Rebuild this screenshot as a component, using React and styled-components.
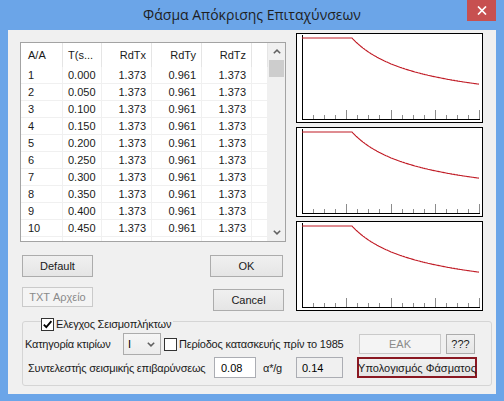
import { createGlobalStyle, styled } from "styled-components";

const GlobalStyle = createGlobalStyle`
  html, body {
    margin: 0;
    padding: 0;
  }
  body {
    font-family: "Liberation Sans", Arial, sans-serif;
    font-size: 11px;
    color: #000;
  }
`;

const Frame = styled.div`
  width: 504px;
  height: 401px;
  box-sizing: border-box;
  background: #6ba5e8;
  padding: 0 8px 7px;
  display: flex;
  flex-direction: column;
`;

const TitleBar = styled.div`
  height: 30px;
  flex-shrink: 0;
  display: flex;
  align-items: flex-start;
`;

const Title = styled.div`
  flex: 1;
  margin-left: 29px;
  text-align: center;
  line-height: 30px;
  font-family: "Open Sans", "Noto Sans", sans-serif;
  font-size: 14px;
  color: #1e1e1e;
`;

const CloseButton = styled.div`
  width: 29px;
  height: 21px;
  background: #c75050;
  display: flex;
  align-items: center;
  justify-content: center;
`;

const Client = styled.div`
  flex: 1;
  background: #f0f0f0;
  display: flex;
  flex-direction: column;
`;

const TopArea = styled.div`
  display: flex;
  gap: 10px;
  padding: 3px 0 0 12px;
`;

const LeftColumn = styled.div`
  width: 266px;
  padding-top: 9px;
  display: flex;
  flex-direction: column;
`;

const ListBox = styled.div`
  height: 200px;
  box-sizing: border-box;
  border: 1px solid #a3a3a3;
  background: #fff;
  display: flex;
  overflow: hidden;
`;

const Table = styled.div`
  flex: 1;
  display: grid;
  grid-template-columns: 42px 39px 50px 50px 50px 1fr;
  grid-template-rows: 24px;
  grid-auto-rows: 17px;
  align-content: start;
  overflow: hidden;
`;

const Cell = styled.div`
  box-sizing: border-box;
  display: flex;
  align-items: center;
  justify-content: ${(p) => (p.$right ? "flex-end" : "flex-start")};
  padding: ${(p) => (p.$right ? "0 5px 0 0" : `0 0 0 ${p.$pad || 0}px`)};
  border-right: 1px solid ${(p) => (p.$head ? "#e5e5e5" : "#f0f0f0")};
  border-bottom: ${(p) => (p.$head ? "none" : "1px solid #f0f0f0")};
  white-space: nowrap;
  color: #1a1a1a;
`;

const Scrollbar = styled.div`
  width: 17px;
  flex-shrink: 0;
  background: #f0f0f0;
  display: flex;
  flex-direction: column;
`;

const ScrollArrow = styled.div`
  height: 17px;
  display: flex;
  align-items: center;
  justify-content: center;
`;

const ScrollThumb = styled.div`
  height: 17px;
  margin: 0 1px;
  background: #cdcdcd;
`;

const ScrollTrack = styled.div`
  flex: 1;
`;

const ButtonRow = styled.div`
  display: flex;
  align-items: flex-start;
  justify-content: space-between;
  margin-top: ${(p) => p.$top}px;
  padding: 0 ${(p) => p.$right}px 0 2px;
`;

const Button = styled.button`
  box-sizing: border-box;
  width: ${(p) => p.$w}px;
  height: ${(p) => p.$h || 22}px;
  margin-top: ${(p) => p.$top || 0}px;
  margin-left: ${(p) => p.$ml || 0}px;
  padding: 0;
  font-family: inherit;
  font-size: 11px;
  font-weight: normal;
  white-space: nowrap;
  display: flex;
  align-items: center;
  justify-content: center;
  border: ${(p) =>
    p.$accent
      ? "2px solid #8a1822"
      : `1px solid ${p.disabled ? "#cacaca" : "#acacac"}`};
  background: ${(p) =>
    p.disabled ? "#f4f4f4" : "linear-gradient(#f0f0f0, #e5e5e5)"};
  color: ${(p) => (p.disabled ? "#8a8a8a" : "#1a1a1a")};
`;

const ChartColumn = styled.div`
  display: flex;
  flex-direction: column;
  gap: 4px;
`;

const ChartBox = styled.div`
  width: 187px;
  height: 90px;
  box-sizing: border-box;
  border: 1px solid #000;
  background: #fff;
`;

const GroupBox = styled.div`
  margin: 10px 0 0 14px;
  width: 470px;
  height: 65px;
  box-sizing: border-box;
  border: 1px solid #d5d5d5;
  border-radius: 3px;
  display: flex;
  flex-direction: column;
`;

const GroupTitle = styled.div`
  align-self: flex-start;
  margin: -5px 0 0 18px;
  height: 14px;
  padding-right: 2px;
  background: #f0f0f0;
  display: flex;
  align-items: center;
  gap: 2px;
`;

const FormRow = styled.div`
  display: flex;
  align-items: center;
  height: ${(p) => p.$h}px;
  margin-top: 2px;
  padding: 0 ${(p) => p.$right}px 0 ${(p) => p.$left}px;
`;

const Label = styled.span`
  width: ${(p) => (p.$w ? `${p.$w}px` : "auto")};
  margin-left: ${(p) => p.$ml || 0}px;
  flex-shrink: 0;
  white-space: nowrap;
  letter-spacing: -0.2px;
  color: #1a1a1a;
`;

const Check = styled.span`
  width: 13px;
  height: 13px;
  box-sizing: border-box;
  border: 1px solid #333;
  background: #fff;
  margin-left: ${(p) => p.$ml || 0}px;
  flex-shrink: 0;
  display: flex;
  align-items: center;
  justify-content: center;
`;

const Select = styled.div`
  width: 38px;
  height: 22px;
  box-sizing: border-box;
  border: 1px solid #acacac;
  background: linear-gradient(#f6f6f6, #ececec);
  display: flex;
  align-items: center;
  justify-content: space-between;
  padding: 0 5px 0 4px;
`;

const Field = styled.div`
  width: ${(p) => p.$w}px;
  height: 21px;
  box-sizing: border-box;
  border: 1px solid #abadb3;
  background: ${(p) => (p.$readOnly ? "#f0f0f0" : "#fff")};
  display: flex;
  align-items: center;
  padding-left: ${(p) => (p.$readOnly ? 5 : 6)}px;
`;

const Spacer = styled.div`
  flex: 1;
`;

const Chevron = ({ up }) => (
  <svg width="8" height="5" viewBox="0 0 8 5">
    <path
      d={up ? "M0.8 4.3 L4 1.1 L7.2 4.3" : "M0.8 0.7 L4 3.9 L7.2 0.7"}
      fill="none"
      stroke="#606060"
      strokeWidth="1.5"
    />
  </svg>
);

const CheckMark = () => (
  <svg width="11" height="11" viewBox="0 0 11 11">
    <path
      d="M1.8 5.6 L4.3 8.2 L9.4 2.2"
      fill="none"
      stroke="#000"
      strokeWidth="1.8"
    />
  </svg>
);

const SpectrumChart = () => {
  const axisX = 5;
  const axisY = 85;
  const top = 4;
  const plateau = 50;
  const pts = [];
  for (let x = axisX; x <= 182; x += 1) {
    const d = x - axisX;
    const f = d <= plateau ? 1 : Math.pow(plateau / d, 2 / 3);
    pts.push(`${x},${(axisY - (axisY - top) * f).toFixed(1)}`);
  }
  const ticks = [];
  for (let i = 0; i <= 16; i += 1) {
    const x = Math.round(axisX + (i * 177) / 16) + 0.5;
    const major = i % 4 === 0;
    ticks.push(
      <line
        key={i}
        x1={x}
        x2={x}
        y1={axisY}
        y2={axisY - (major ? 9 : 4)}
        stroke="#8c8c8c"
        strokeWidth="1"
      />
    );
  }
  return (
    <svg width="185" height="88" viewBox="0 0 185 88">
      {ticks}
      <line x1={axisX} x2={183} y1={axisY + 0.5} y2={axisY + 0.5} stroke="#000" />
      <line x1={axisX + 0.5} x2={axisX + 0.5} y1={1} y2={axisY + 1} stroke="#000" />
      <polyline points={pts.join(" ")} fill="none" stroke="#c01a24" strokeWidth="1.1" />
    </svg>
  );
};

const rows = Array.from({ length: 10 }, (_, i) => ({
  n: i + 1,
  t: (i * 0.05).toFixed(3),
  x: "1.373",
  y: "0.961",
  z: "1.373",
}));

function App() {
  return (
    <>
      <GlobalStyle />
      <Frame>
        <TitleBar>
          <Title>Φάσμα Απόκρισης Επιταχύνσεων</Title>
          <CloseButton>
            <svg width="10" height="9" viewBox="0 0 10 9">
              <path d="M1 0.5 L9 8.5 M9 0.5 L1 8.5" stroke="#fff" strokeWidth="1.7" />
            </svg>
          </CloseButton>
        </TitleBar>
        <Client>
          <TopArea>
            <LeftColumn>
              <ListBox>
                <Table>
                  <Cell $head $pad={7}>A/A</Cell>
                  <Cell $head $pad={5}>T(s...</Cell>
                  <Cell $head $right>RdTx</Cell>
                  <Cell $head $right>RdTy</Cell>
                  <Cell $head $right>RdTz</Cell>
                  <Cell $head />
                  {rows.map((r) => [
                    <Cell key={`n${r.n}`} $pad={7}>{r.n}</Cell>,
                    <Cell key={`t${r.n}`} $pad={5}>{r.t}</Cell>,
                    <Cell key={`x${r.n}`} $right>{r.x}</Cell>,
                    <Cell key={`y${r.n}`} $right>{r.y}</Cell>,
                    <Cell key={`z${r.n}`} $right>{r.z}</Cell>,
                    <Cell key={`e${r.n}`} />,
                  ])}
                  {[0, 1, 2, 3, 4, 5].map((c) => (
                    <Cell key={`f${c}`} />
                  ))}
                </Table>
                <Scrollbar>
                  <ScrollArrow>
                    <Chevron up />
                  </ScrollArrow>
                  <ScrollThumb />
                  <ScrollTrack />
                  <ScrollArrow>
                    <Chevron />
                  </ScrollArrow>
                </Scrollbar>
              </ListBox>
              <ButtonRow $top={13} $right={3}>
                <Button $w={71}>Default</Button>
                <Button $w={73}>OK</Button>
              </ButtonRow>
              <ButtonRow $top={10} $right={2}>
                <Button $w={71} $h={20} disabled>
                  TXT Αρχείο
                </Button>
                <Button $w={71} $top={2}>
                  Cancel
                </Button>
              </ButtonRow>
            </LeftColumn>
            <ChartColumn>
              <ChartBox>
                <SpectrumChart />
              </ChartBox>
              <ChartBox>
                <SpectrumChart />
              </ChartBox>
              <ChartBox>
                <SpectrumChart />
              </ChartBox>
            </ChartColumn>
          </TopArea>
          <GroupBox>
            <GroupTitle>
              <Check>
                <CheckMark />
              </Check>
              <Label>Ελεγχος Σεισμοπλήκτων</Label>
            </GroupTitle>
            <FormRow $h={22} $left={2} $right={16}>
              <Label $w={98}>Κατηγορία κτιρίων</Label>
              <Select>
                <span>I</span>
                <Chevron />
              </Select>
              <Check $ml={3} />
              <Label $ml={2}>Περίοδος κατασκευής πρίν το 1985</Label>
              <Spacer />
              <Button $w={82} $h={20} disabled>
                ΕΑΚ
              </Button>
              <Button $w={29} $h={20} $ml={5}>
                ???
              </Button>
            </FormRow>
            <FormRow $h={21} $left={5} $right={14}>
              <Label $w={186}>Συντελεστής σεισμικής επιβαρύνσεως</Label>
              <Field $w={42}>0.08</Field>
              <Label $w={33} $ml={7}>α*/g</Label>
              <Field $w={47} $readOnly>
                0.14
              </Field>
              <Spacer />
              <Button $w={120} $h={21} $accent>
                Υπολογισμός Φάσματος
              </Button>
            </FormRow>
          </GroupBox>
        </Client>
      </Frame>
    </>
  );
}

export default App;
